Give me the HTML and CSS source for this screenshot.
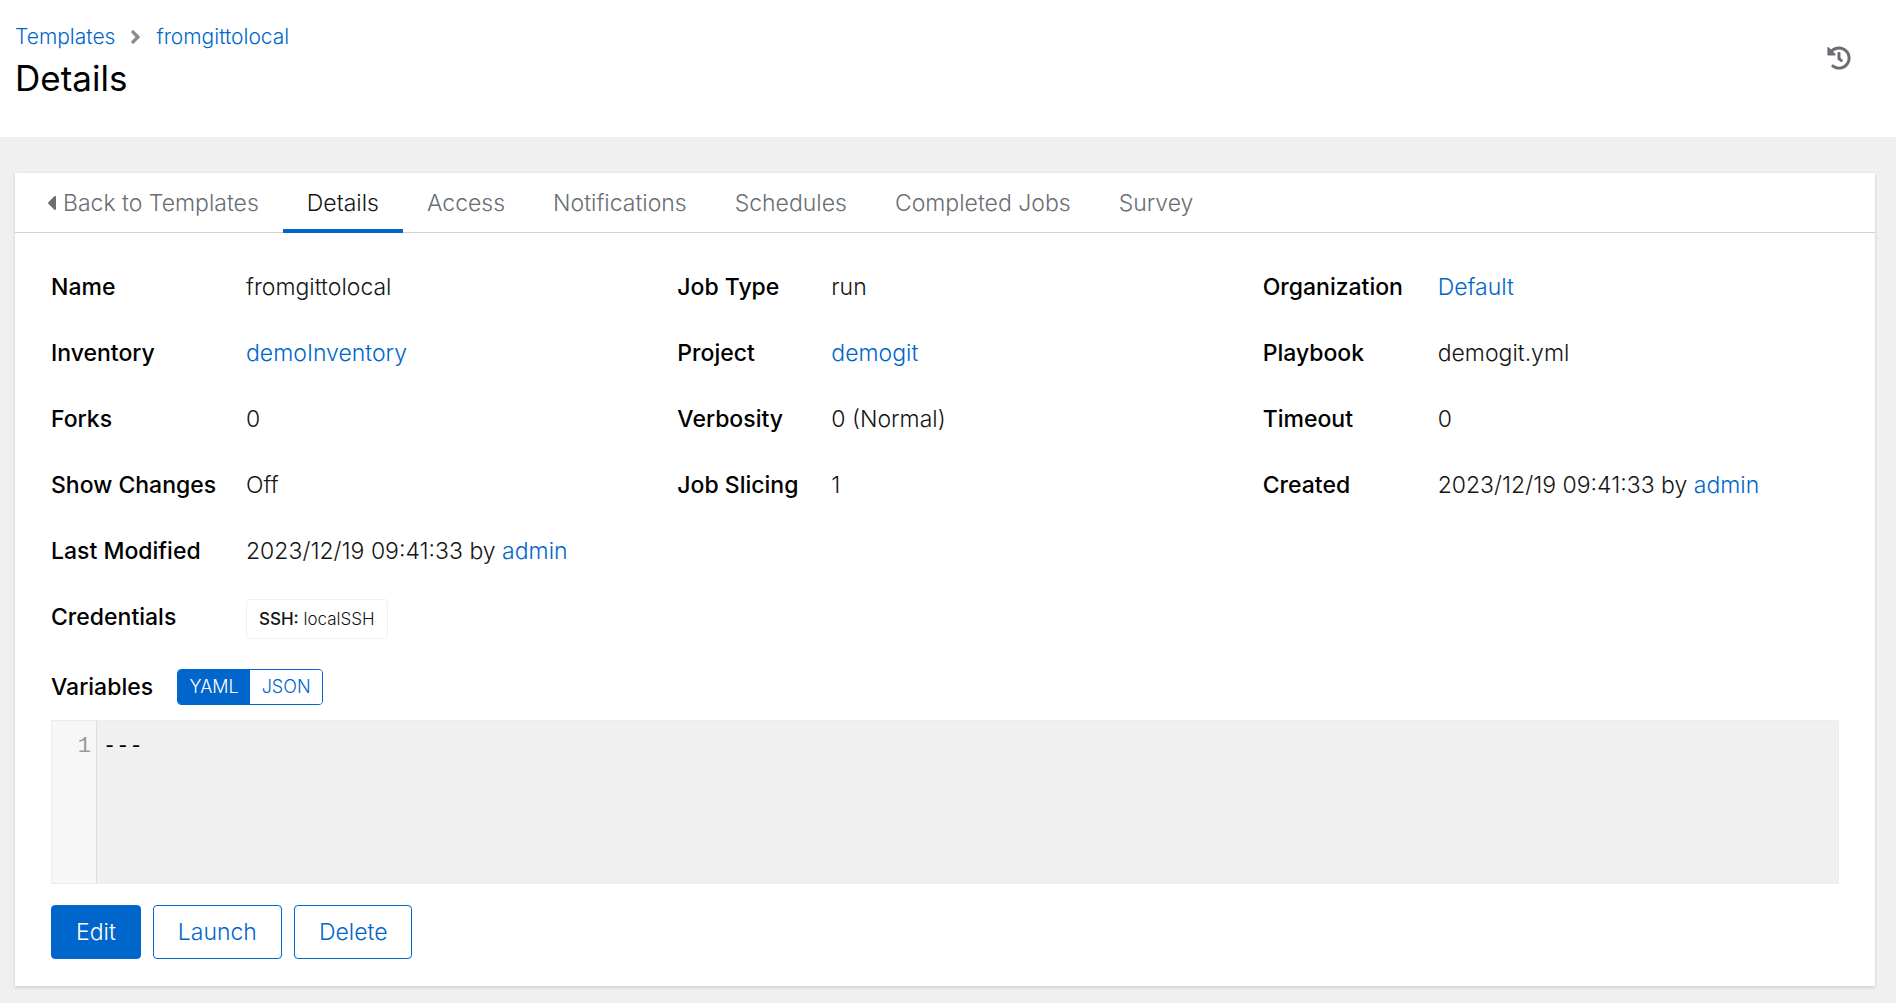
FILE: index.html
```html
<!DOCTYPE html>
<html lang="en">
<head>
<meta charset="utf-8">
<meta name="viewport" content="width=device-width, initial-scale=1">
<title>fromgittolocal Details</title>
<link rel="stylesheet" href="styles.css">
</head>
<body>
<header class="page-header">
  <div class="page-heading">
    <nav class="breadcrumb" aria-label="Breadcrumb">
      <a href="#">Templates</a>
      <svg class="breadcrumb-divider" viewBox="0 0 256 512" aria-hidden="true"><path d="M224.3 273l-136 136c-9.4 9.4-24.6 9.4-33.9 0l-22.6-22.6c-9.4-9.4-9.4-24.6 0-33.9l96.4-96.4-96.4-96.4c-9.4-9.4-9.4-24.6 0-33.9L54.3 103c9.4-9.4 24.6-9.4 33.9 0l136 136c9.5 9.4 9.5 24.6.1 34z"/></svg>
      <a href="#">fromgittolocal</a>
    </nav>
    <h1 class="page-title">Details</h1>
  </div>
  <button class="history-button" type="button" aria-label="View activity stream">
    <svg class="history-icon" viewBox="0 0 512 512" aria-hidden="true"><path d="M504 255.531c.253 136.64-111.18 248.372-247.82 248.468-59.015.042-113.223-20.53-155.822-54.911-11.077-8.94-11.905-25.541-1.839-35.607l11.267-11.267c8.609-8.609 22.353-9.551 31.891-1.984C173.062 425.135 212.781 440 256 440c101.705 0 184-82.311 184-184 0-101.705-82.311-184-184-184-48.814 0-93.149 18.969-126.068 49.932l50.754 50.754c10.08 10.08 2.941 27.314-11.313 27.314H24c-8.837 0-16-7.163-16-16V38.627c0-14.254 17.234-21.393 27.314-11.314l49.372 49.372C129.209 34.136 189.552 8 256 8c136.81 0 247.747 110.78 248 247.531zm-180.912 78.784l9.823-12.63c8.138-10.463 6.253-25.542-4.21-33.679L288 256.349V152c0-13.255-10.745-24-24-24h-16c-13.255 0-24 10.745-24 24v135.651l65.409 50.874c10.463 8.137 25.541 6.253 33.679-4.21z"/></svg>
  </button>
</header>
<main class="page-main">
  <section class="card">
    <nav class="tabs" aria-label="Template sections">
      <a class="tab" href="#"><svg class="back-icon" viewBox="0 0 192 512" aria-hidden="true"><path d="M192 127.338v257.324c0 17.818-21.543 26.741-34.142 14.142L29.196 270.142c-7.81-7.81-7.81-20.474 0-28.284l128.662-128.662c12.599-12.6 34.142-3.676 34.142 14.142z"/></svg>Back to Templates</a>
      <a class="tab tab-current" href="#" aria-current="page">Details</a>
      <a class="tab" href="#">Access</a>
      <a class="tab" href="#">Notifications</a>
      <a class="tab" href="#">Schedules</a>
      <a class="tab" href="#">Completed Jobs</a>
      <a class="tab" href="#">Survey</a>
    </nav>
    <div class="card-body">
      <dl class="details">
        <dt>Name</dt><dd>fromgittolocal</dd>
        <dt>Job Type</dt><dd>run</dd>
        <dt>Organization</dt><dd><a href="#">Default</a></dd>
        <dt>Inventory</dt><dd><a href="#">demoInventory</a></dd>
        <dt>Project</dt><dd><a href="#">demogit</a></dd>
        <dt>Playbook</dt><dd>demogit.yml</dd>
        <dt>Forks</dt><dd>0</dd>
        <dt>Verbosity</dt><dd>0 (Normal)</dd>
        <dt>Timeout</dt><dd>0</dd>
        <dt>Show Changes</dt><dd>Off</dd>
        <dt>Job Slicing</dt><dd>1</dd>
        <dt>Created</dt><dd>2023/12/19 09:41:33 by <a href="#">admin</a></dd>
        <dt>Last Modified</dt><dd>2023/12/19 09:41:33 by <a href="#">admin</a></dd>
        <dt class="row-start">Credentials</dt><dd><span class="chip"><strong>SSH:</strong> localSSH</span></dd>
      </dl>
      <div class="variables-bar">
        <label class="variables-label" for="variables">Variables</label>
        <div class="toggle" role="group" aria-label="Variables format">
          <button class="toggle-button toggle-selected" type="button" aria-pressed="true">YAML</button>
          <button class="toggle-button" type="button" aria-pressed="false">JSON</button>
        </div>
      </div>
      <div class="editor">
        <div class="editor-gutter" aria-hidden="true">1</div>
        <textarea class="editor-text" id="variables" readonly>---</textarea>
      </div>
      <div class="actions">
        <button class="button button-primary" type="button">Edit</button>
        <button class="button" type="button">Launch</button>
        <button class="button" type="button">Delete</button>
      </div>
    </div>
  </section>
</main>
</body>
</html>
```

FILE: styles.css
```css
:root {
  --blue: #06c;
  --text: #151515;
  --muted: #6a6e73;
  --page: #f0f0f0;
}

* {
  box-sizing: border-box;
}

body {
  margin: 0;
  min-height: 100vh;
  background: var(--page);
  color: var(--text);
  font: 300 23px/36px Inter, "Liberation Sans", sans-serif;
}

a {
  color: var(--blue);
  text-decoration: none;
}

button {
  font: inherit;
  cursor: pointer;
}

svg {
  display: block;
  flex: none;
  fill: currentColor;
}

.page-header {
  display: flex;
  justify-content: space-between;
  align-items: flex-start;
  padding: 20px 21px 35px 15px;
  background: #fff;
}

.breadcrumb {
  display: flex;
  align-items: center;
  font-size: 21px;
  line-height: 34px;
}

.breadcrumb-divider {
  width: 11px;
  height: 22px;
  margin: 0 15px;
  color: #8a8d90;
}

.page-title {
  margin: 0;
  font-size: 35px;
  font-weight: 400;
  line-height: 48px;
  color: #000;
}

.history-button {
  padding: 26px 24px 0;
  border: 0;
  background: none;
  color: var(--muted);
}

.history-icon {
  width: 24px;
  height: 24px;
}

.page-main {
  padding: 36px 21px 16px 15px;
}

.card {
  background: #fff;
  box-shadow: 0 2px 3px rgba(3, 3, 3, .12), 0 0 3px rgba(3, 3, 3, .06);
}

.tabs {
  display: flex;
  padding-left: 8px;
  border-bottom: 1px solid #d2d2d2;
}

.tab {
  display: flex;
  align-items: center;
  gap: 7px;
  height: 60px;
  margin-bottom: -1px;
  padding: 0 24px;
  color: var(--muted);
  white-space: nowrap;
}

.tab-current {
  color: var(--text);
  box-shadow: inset 0 -4px var(--blue);
}

.back-icon {
  width: 9px;
  height: 24px;
}

.card-body {
  padding: 36px 36px 27px;
}

.details {
  display: grid;
  grid-template-columns: 165px 1fr 124px 1fr 145px 1fr;
  gap: 30px;
  margin: 0 0 30px;
}

.details dt,
.variables-label {
  font-weight: 500;
  color: #000;
  white-space: nowrap;
}

.details dd {
  margin: 0;
}

.row-start {
  grid-column: 1;
}

.chip {
  display: block;
  width: max-content;
  padding: 1px 12px 0;
  border: 1px solid var(--page);
  border-radius: 4px;
  font-size: 17px;
  line-height: 37px;
}

.chip strong {
  font-weight: 500;
}

.variables-bar {
  display: flex;
  align-items: center;
  gap: 24px;
  margin-bottom: 15px;
}

.toggle {
  display: flex;
  border: 1px solid var(--blue);
  border-radius: 4px;
  overflow: hidden;
}

.toggle-button {
  width: 72px;
  padding: 0;
  border: 0;
  background: #fff;
  color: var(--blue);
  font-size: 18px;
  line-height: 34px;
}

.toggle-selected {
  background: var(--blue);
  color: #fff;
}

.editor {
  display: flex;
  height: 164px;
  border: 1px solid #ececec;
  background: var(--page);
  font: 400 22px/36px "Liberation Mono", monospace;
}

.editor-gutter {
  width: 45px;
  padding: 8px 5px 0 0;
  border-right: 1px solid #ddd;
  background: #f7f7f7;
  color: #999;
  text-align: right;
}

.editor-text {
  flex: 1;
  padding: 8px 6px 0;
  border: 0;
  outline: 0;
  background: none;
  color: #000;
  font: inherit;
  resize: none;
}

.actions {
  display: flex;
  gap: 12px;
  margin-top: 21px;
}

.button {
  padding: 8px 24px;
  border: 1px solid var(--blue);
  border-radius: 4px;
  background: #fff;
  color: var(--blue);
}

.button-primary {
  background: var(--blue);
  color: #fff;
}
```
